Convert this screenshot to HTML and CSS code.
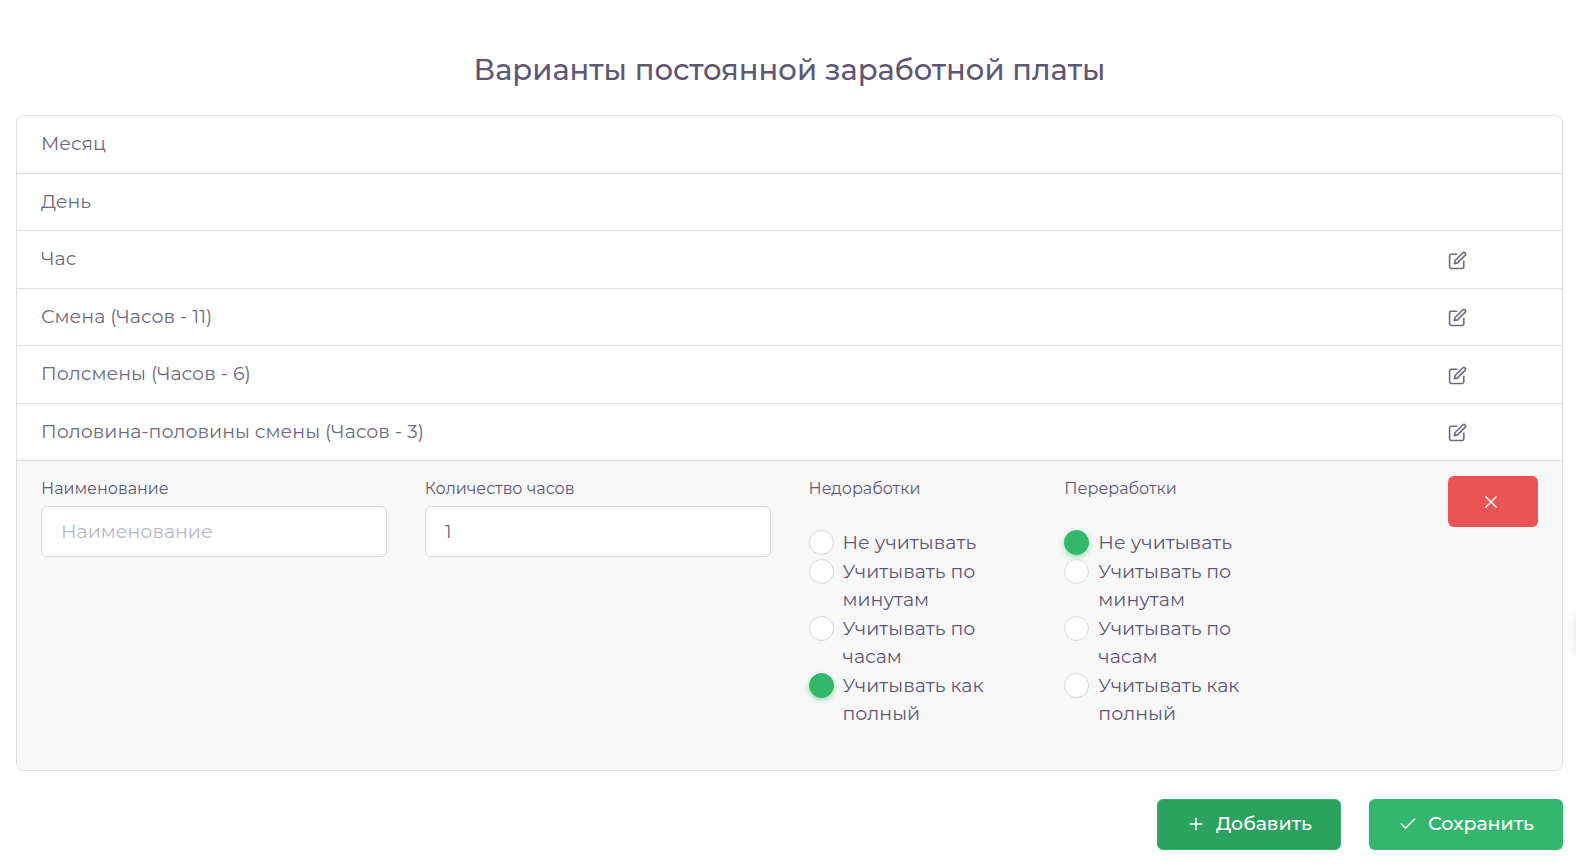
FILE: index.html
```html
<!DOCTYPE html>
<html lang="ru">
<head>
<meta charset="utf-8">
<meta name="viewport" content="width=device-width, initial-scale=1">
<title>Варианты постоянной заработной платы</title>
<link rel="stylesheet" href="styles.css">
</head>
<body>
<svg class="sprite" aria-hidden="true">
  <symbol id="edit" viewBox="0 0 24 24"><path d="M11 4H4a2 2 0 0 0-2 2v14a2 2 0 0 0 2 2h14a2 2 0 0 0 2-2v-7"/><path d="M18.5 2.5a2.121 2.121 0 0 1 3 3L12 15l-4 1 1-4 9.5-9.5z"/></symbol>
  <symbol id="close" viewBox="0 0 24 24"><path d="M18 6 6 18M6 6l12 12"/></symbol>
  <symbol id="plus" viewBox="0 0 24 24"><path d="M12 5v14M5 12h14"/></symbol>
  <symbol id="check" viewBox="0 0 24 24"><path d="M20 6 9 17l-5-5"/></symbol>
</svg>
<main class="page">
  <h1 class="title">Варианты постоянной заработной платы</h1>
  <ul class="list">
    <li class="item"><span class="item-name">Месяц</span></li>
    <li class="item"><span class="item-name">День</span></li>
    <li class="item"><span class="item-name">Час</span><button class="edit" type="button" aria-label="Изменить"><svg class="icon"><use href="#edit"/></svg></button></li>
    <li class="item"><span class="item-name">Смена (Часов - 11)</span><button class="edit" type="button" aria-label="Изменить"><svg class="icon"><use href="#edit"/></svg></button></li>
    <li class="item"><span class="item-name">Полсмены (Часов - 6)</span><button class="edit" type="button" aria-label="Изменить"><svg class="icon"><use href="#edit"/></svg></button></li>
    <li class="item"><span class="item-name">Половина-половины смены (Часов - 3)</span><button class="edit" type="button" aria-label="Изменить"><svg class="icon"><use href="#edit"/></svg></button></li>
    <li class="item item-form">
      <div class="field">
        <label class="label" for="name">Наименование</label>
        <input class="input" id="name" type="text" placeholder="Наименование">
      </div>
      <div class="field">
        <label class="label" for="hours">Количество часов</label>
        <input class="input" id="hours" type="text" inputmode="numeric" value="1">
      </div>
      <div class="choices" role="radiogroup" aria-labelledby="under">
        <div class="label" id="under">Недоработки</div>
        <div class="options">
          <label class="option"><input class="radio" type="radio" name="under"><span>Не учитывать</span></label>
          <label class="option"><input class="radio" type="radio" name="under"><span>Учитывать по минутам</span></label>
          <label class="option"><input class="radio" type="radio" name="under"><span>Учитывать по часам</span></label>
          <label class="option"><input class="radio" type="radio" name="under" checked><span>Учитывать как полный</span></label>
        </div>
      </div>
      <div class="choices" role="radiogroup" aria-labelledby="over">
        <div class="label" id="over">Переработки</div>
        <div class="options">
          <label class="option"><input class="radio" type="radio" name="over" checked><span>Не учитывать</span></label>
          <label class="option"><input class="radio" type="radio" name="over"><span>Учитывать по минутам</span></label>
          <label class="option"><input class="radio" type="radio" name="over"><span>Учитывать по часам</span></label>
          <label class="option"><input class="radio" type="radio" name="over"><span>Учитывать как полный</span></label>
        </div>
      </div>
      <button class="btn btn-danger" type="button" aria-label="Удалить"><svg class="icon icon-btn"><use href="#close"/></svg></button>
    </li>
  </ul>
  <div class="actions">
    <button class="btn btn-add" type="button"><svg class="icon icon-btn"><use href="#plus"/></svg>Добавить</button>
    <button class="btn btn-save" type="button"><svg class="icon icon-btn"><use href="#check"/></svg>Сохранить</button>
  </div>
</main>
<div class="side-tab"></div>
</body>
</html>
```
FILE: styles.css
```css
*, *::before, *::after { box-sizing: border-box; }

body {
  margin: 0;
  background: #fff;
  color: #6e6b7b;
  font-family: Montserrat, Inter, "Open Sans", sans-serif;
  font-size: 19px;
  line-height: 1.5;
}

button, input { font: inherit; color: inherit; }

.sprite { display: none; }

.icon {
  display: block;
  width: 19px;
  height: 19px;
  fill: none;
  stroke: currentColor;
  stroke-width: 2;
  stroke-linecap: round;
  stroke-linejoin: round;
}

.icon-btn {
  flex: none;
  width: 20px;
  height: 20px;
  stroke-width: 1.8;
}

.page { padding: 50px 13px 16px 16px; }

.title {
  margin: 0 0 25px;
  color: #5e5873;
  font-size: 29px;
  font-weight: 500;
  line-height: 40px;
  text-align: center;
}

.list {
  margin: 0;
  padding: 0;
  list-style: none;
  border: 1px solid #e0e0e1;
  border-radius: 7px;
  overflow: hidden;
}

.item {
  display: grid;
  grid-template-columns: repeat(12, minmax(0, 1fr));
  column-gap: 38px;
  padding: 14px 24px;
}

.item + .item { border-top: 1px solid #e0e0e1; }

.item-name { grid-column: span 11; }

.edit {
  align-self: center;
  justify-self: start;
  padding: 2px 0 0;
  border: 0;
  background: none;
  cursor: pointer;
}

.item-form {
  align-items: start;
  background: #f8f8f8;
  color: #5e5873;
  padding-top: 15px;
  padding-bottom: 41px;
}

.field { grid-column: span 3; }
.choices { grid-column: span 2; }

.label {
  display: block;
  font-size: 16px;
  line-height: 26px;
}

.input {
  display: block;
  width: 100%;
  height: 51px;
  margin-top: 4px;
  padding: 0 19px;
  color: #6e6b7b;
  background: #fff;
  border: 1px solid #d8d6de;
  border-radius: 6px;
}

.input::placeholder { color: #b9b9c3; opacity: 1; }

.options { margin-top: 27px; }

.option {
  display: flex;
  align-items: flex-start;
  gap: 9px;
}

.radio {
  flex: none;
  appearance: none;
  width: 25px;
  height: 25px;
  margin: 1px 0 0;
  background: #fff;
  border: 1px solid #d8d6de;
  border-radius: 50%;
}

.radio:checked {
  background: #33b76c;
  border-color: #33b76c;
  box-shadow: 0 2px 5px rgba(51, 183, 108, 0.5);
}

.btn {
  display: flex;
  align-items: center;
  height: 51px;
  padding: 0 28px;
  gap: 10px;
  border: 1px solid transparent;
  border-radius: 6px;
  color: #fff;
  font-weight: 500;
  cursor: pointer;
}

.btn-danger {
  grid-column: 12;
  justify-content: center;
  padding: 0 5px 0 0;
  background: #ea5455;
}

.btn-add { background: #2da25f; border-color: #33b76c; }
.btn-save { background: #33b76c; }

.actions {
  display: flex;
  justify-content: flex-end;
  gap: 28px;
  margin-top: 28px;
}

/* Collapsed side panel handle: only its shadow reaches the window. */
.side-tab {
  position: fixed;
  top: 612px;
  right: -42px;
  width: 40px;
  height: 42px;
  box-shadow: 0 0 12px rgba(34, 41, 47, 0.2);
}
```
